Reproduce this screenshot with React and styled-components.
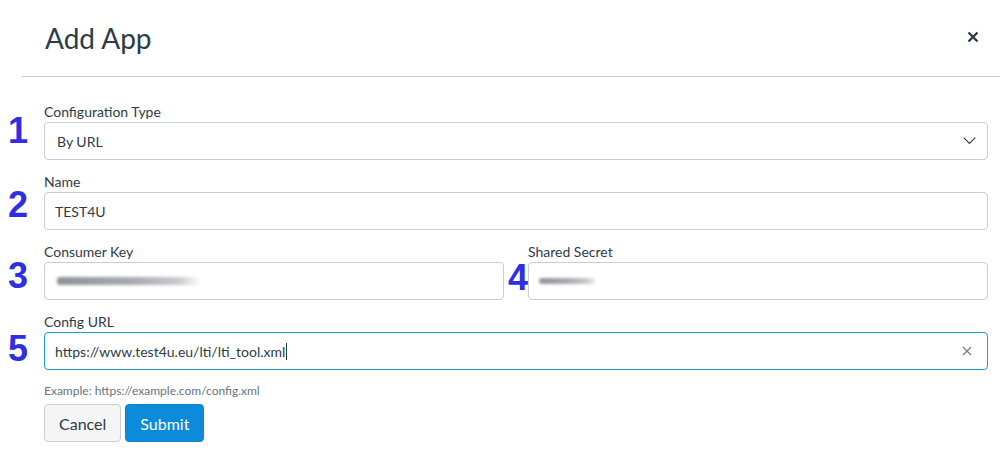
import React from 'react'
import styled, { createGlobalStyle } from 'styled-components'

const GlobalStyle = createGlobalStyle`
  html, body {
    margin: 0;
    padding: 0;
    background: #fff;
  }
  body {
    font-family: Lato, "Open Sans", sans-serif;
    color: #2d3b45;
  }
`;

const Page = styled.div`
  width: 1000px;
  height: 458px;
  overflow: hidden;
  background: #fff;
`;

const Header = styled.header`
  box-sizing: border-box;
  display: flex;
  align-items: center;
  justify-content: space-between;
  height: 77px;
  margin-left: 22px;
  padding: 0 21px 0 23px;
  border-bottom: 1px solid #c7cdd1;
`;

const Title = styled.h1`
  margin: 0 0 1px;
  font-size: 28px;
  line-height: 34px;
  font-weight: 400;
  color: #2d3b45;
`;

const CloseBtn = styled.button`
  display: flex;
  padding: 0;
  border: none;
  background: transparent;
  color: #2d3b45;
  cursor: pointer;
  margin-top: -2px;
`;

const Form = styled.form`
  display: grid;
  grid-template-columns: 44px 1fr 24px 1fr;
  row-gap: 12px;
  padding: 25px 12px 0 0;
`;

// the big blue numbers drawn over the screenshot
const Marker = styled.span`
  align-self: start;
  margin-top: ${p => p.$top}px;
  padding-left: ${p => p.$inset}px;
  font-family: "Liberation Sans", Arial, sans-serif;
  font-weight: 700;
  font-size: 36px;
  line-height: 36px;
  color: #2e2ee2;
`;

const Field = styled.div`
  display: flex;
  flex-direction: column;
  grid-column: ${p => (p.$wide ? 'span 3' : 'span 1')};
`;

const Label = styled.label`
  font-size: 14px;
  line-height: 20px;
  color: #2d3b45;
`;

const Control = styled.div`
  box-sizing: border-box;
  display: flex;
  align-items: center;
  height: 38px;
  padding: 0 ${p => p.$right || 10}px 0 ${p => p.$left || 10}px;
  border: 1px solid ${p => (p.$focused ? '#1b9ad8' : '#c7cdd1')};
  border-radius: 4px;
  background: #fff;
  font-size: 14px;
  color: #2d3b45;
`;

const Value = styled.span`
  flex: 1;
  display: flex;
  align-items: center;
  white-space: nowrap;
`;

const Caret = styled.span`
  display: inline-block;
  width: 1px;
  height: 17px;
  margin-left: 1px;
  background: #2d3b45;
`;

// redacted secrets, smeared grey
const Smudge = styled.span`
  display: block;
  width: ${p => p.$w}px;
  height: ${p => p.$h || 7}px;
  margin-left: ${p => p.$x || 0}px;
  border-radius: 3px;
  background: linear-gradient(90deg, #8d9297 0%, #a9adb1 55%, #c9ccce 85%, rgba(255,255,255,0) 100%);
  filter: blur(1.4px);
`;

const Footer = styled.div`
  grid-column: 2 / -1;
`;

const Hint = styled.div`
  font-size: 12px;
  line-height: 18px;
  color: #68737c;
`;

const Buttons = styled.div`
  display: flex;
  gap: 4px;
  margin-top: 4px;
`;

const Button = styled.button`
  box-sizing: border-box;
  height: 38px;
  padding: 0 14px;
  border-radius: 4px;
  font-family: Lato, sans-serif;
  font-size: 16px;
  cursor: pointer;
  border: 1px solid ${p => (p.$primary ? '#0a85d0' : '#c7cdd1')};
  background: ${p => (p.$primary ? '#0b8bd9' : '#f5f5f5')};
  color: ${p => (p.$primary ? '#fff' : '#2d3b45')};
`;

const Chevron = () => (
  <svg width="13" height="8" viewBox="0 0 13 8" fill="none">
    <polyline points="0.7,0.7 6.5,6.5 12.3,0.7" stroke="#2d3b45" strokeWidth="1.1" />
  </svg>
)

const ClearIcon = () => (
  <svg width="10" height="10" viewBox="0 0 10 10" fill="none">
    <path d="M1 1L9 9M9 1L1 9" stroke="#73818c" strokeWidth="1.3" />
  </svg>
)

const CloseIcon = () => (
  <svg width="12" height="12" viewBox="0 0 12 12" fill="none">
    <path d="M1.5 1.5L10.5 10.5M10.5 1.5L1.5 10.5" stroke="currentColor" strokeWidth="2.4" />
  </svg>
)

const App = () => {
  return (
    <Page>
      <GlobalStyle />
      <Header>
        <Title>Add App</Title>
        <CloseBtn aria-label="Close"><CloseIcon /></CloseBtn>
      </Header>

      <Form>
        <Marker $top={11} $inset={8}>1</Marker>
        <Field $wide>
          <Label>Configuration Type</Label>
          <Control $left={12} $right={11}>
            <Value>By URL</Value>
            <Chevron />
          </Control>
        </Field>

        <Marker $top={15} $inset={8}>2</Marker>
        <Field $wide>
          <Label>Name</Label>
          <Control>
            <Value>TEST4U</Value>
          </Control>
        </Field>

        <Marker $top={16} $inset={8}>3</Marker>
        <Field>
          <Label>Consumer Key</Label>
          <Control $left={12}>
            <Value><Smudge $w={144} $h={8} /></Value>
          </Control>
        </Field>
        <Marker $top={18} $inset={4}>4</Marker>
        <Field>
          <Label>Shared Secret</Label>
          <Control>
            <Value><Smudge $w={58} $h={6} /></Value>
          </Control>
        </Field>

        <Marker $top={19} $inset={8}>5</Marker>
        <Field $wide>
          <Label>Config URL</Label>
          <Control $focused $right={15}>
            <Value>https://www.test4u.eu/lti/lti_tool.xml<Caret /></Value>
            <ClearIcon />
          </Control>
        </Field>

        <Footer>
          <Hint>Example: https://example.com/config.xml</Hint>
          <Buttons>
            <Button type="button">Cancel</Button>
            <Button type="button" $primary>Submit</Button>
          </Buttons>
        </Footer>
      </Form>
    </Page>
  )
}

export default App
